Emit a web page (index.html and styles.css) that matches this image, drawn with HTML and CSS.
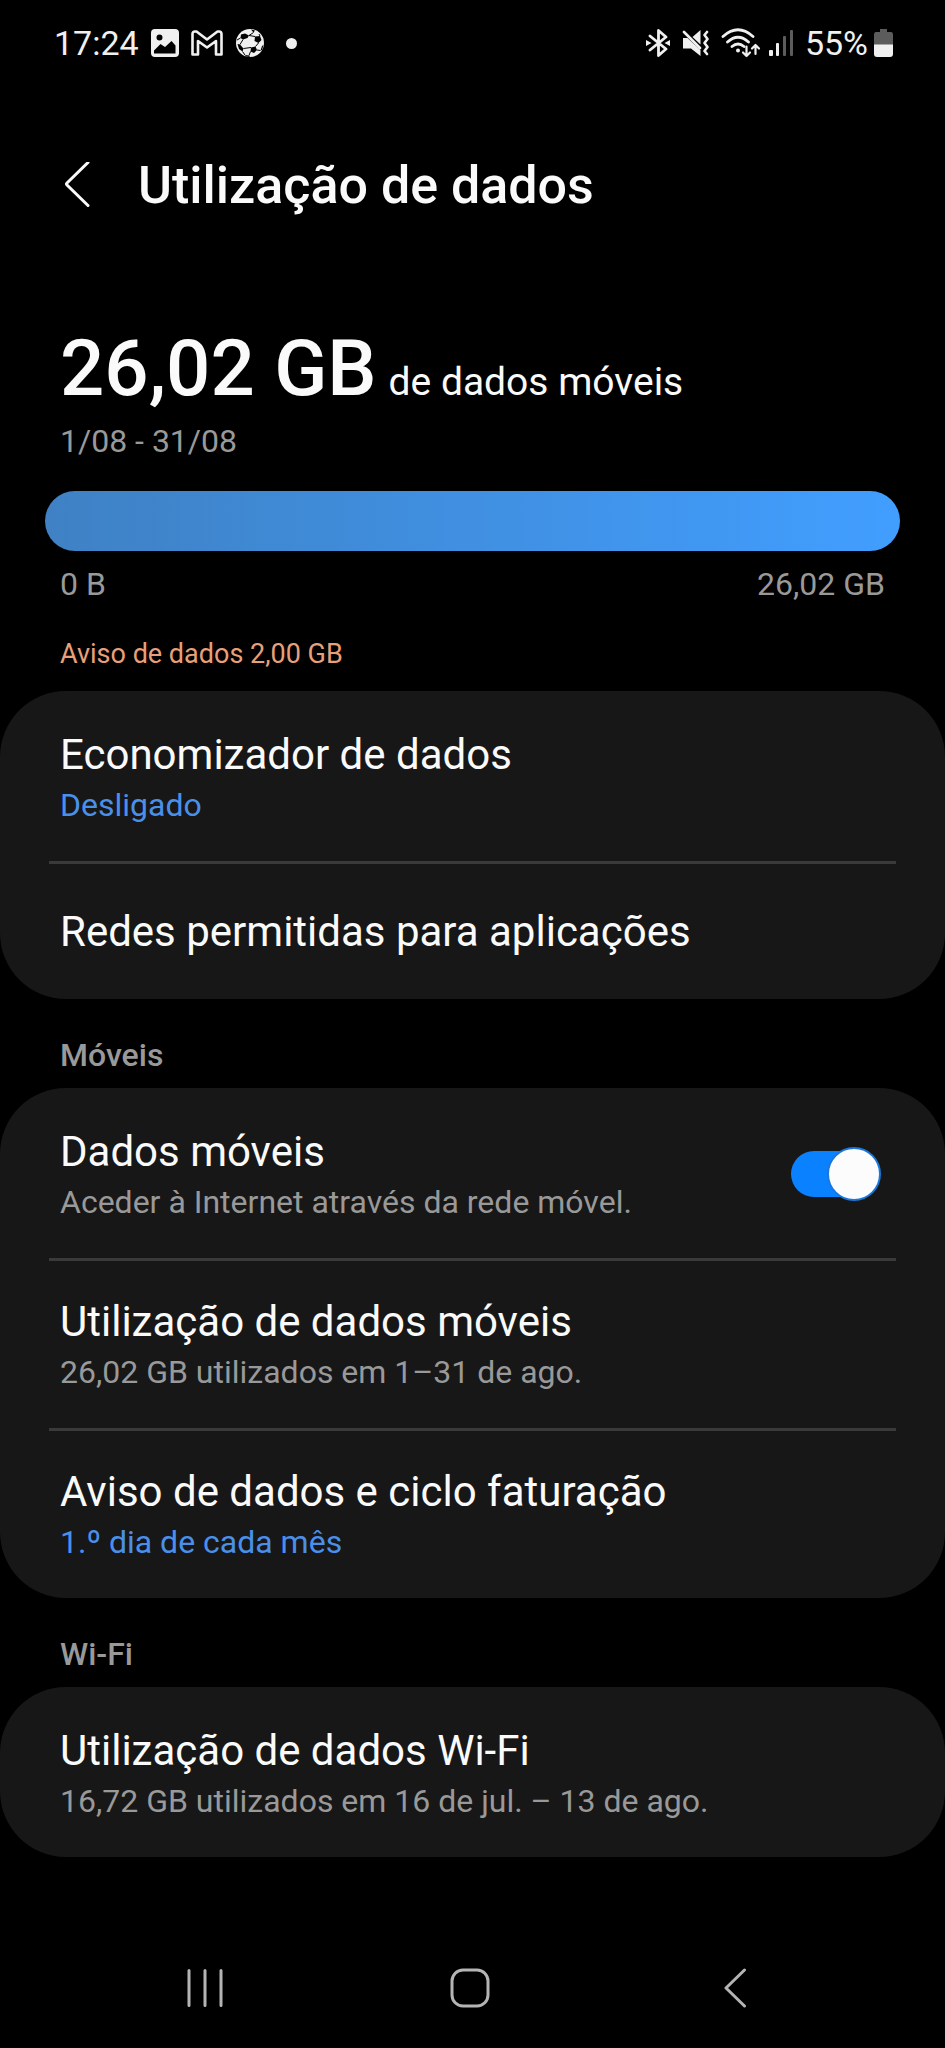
FILE: index.html
```html
<!DOCTYPE html>
<html lang="pt-PT">
<head>
<meta charset="utf-8">
<meta name="viewport" content="width=device-width, initial-scale=1">
<title>Utilização de dados</title>
<link rel="stylesheet" href="styles.css">
</head>
<body>
<div class="screen">
  <div class="status">
    <div class="status-left">
      <span class="status-text">17:24</span>
      <svg class="icon" width="28" height="28" viewBox="0 0 28 28" aria-hidden="true"><path fill="#f0f0f0" fill-rule="evenodd" d="M4 0H24Q28 0 28 4V24Q28 28 24 28H4Q0 28 0 24V4Q0 0 4 0ZM8.500 5.500A3 3 0 1 0 8.500 11.500A3 3 0 1 0 8.500 5.500ZM3 24.500H24.500V16.500L20.500 12L14 18L9.500 15L3 21.500Z"/></svg>
      <svg class="icon" width="32" height="26" viewBox="0 0 32 26" aria-hidden="true"><path fill="none" stroke="#f0f0f0" stroke-width="2.600" stroke-linejoin="round" d="M1.500 4Q1.500 1.500 4 1.500H5.500L16 9.500L26.500 1.500H28Q30.500 1.500 30.500 4V24.500H25V11L16 17.500L7 11V24.500H1.500Z"/></svg>
      <svg class="icon" width="30" height="30" viewBox="0 0 30 30" aria-hidden="true"><circle cx="15" cy="15" r="14" fill="#f0f0f0"/><g fill="#000"><path d="M6 6.500L10 5.500L14 7.500L12.500 10L8 11.500L5.500 10ZM20 8.500L25 8L26.500 12L23.500 15L19.500 13ZM2.500 16L5 16.500L8.500 20.500L7.500 23.500L4 21ZM16 19.500L20.500 18.500L22 22L19 25L15.500 23.500ZM16 1.500L20 2.500L18.500 4.500ZM27 18L28.500 17L27 22L25.500 22.500ZM10 27L14 27.500L15 29L11 28.500Z"/><path fill="none" stroke="#000" stroke-width="1" d="M14 7.500L20 8.500M8 11.500L5 16.500M8.500 20.500L16 19.500M23.500 15L20.500 18.500M18.500 4.500L14 7.500M22 22L25.500 22.500M7.500 23.500L10 27M15.500 23.500L14 27.500M5.500 10L2 12M25 8L24 6"/></g></svg>
      <span class="dot"></span>
    </div>
    <div class="status-right">
      <svg class="icon" width="24" height="28" viewBox="0 0 24 28" aria-hidden="true"><g fill="none" stroke="#f0f0f0" stroke-width="2.800" stroke-linejoin="round" stroke-linecap="round"><path d="M4 7L20 20L12.500 26.500V1.500L20 8L4 21"/></g><path fill="#f0f0f0" d="M0 11L5.500 14L0 17ZM24 11L18.500 14L24 17Z"/></svg>
      <svg class="icon icon-mute" width="27" height="28" viewBox="0 0 27 28" aria-hidden="true"><path fill="#f0f0f0" d="M1 9H5.500L18.500 21V27L9 19.500H1ZM18.500 1V15.500L10.500 8Z"/><path fill="none" stroke="#f0f0f0" stroke-width="2.600" stroke-linecap="round" stroke-linejoin="round" d="M2 3L18 19M25 3L22.500 6L25.500 10L22.500 14L25.500 18L22.500 22L25 25"/></svg>
      <svg class="icon icon-wifi" width="40" height="30" viewBox="0 0 40 30" aria-hidden="true"><g fill="none" stroke="#f0f0f0" stroke-width="2.800" stroke-linecap="round"><path d="M2 8.500Q17 -5 32 8.500M6.500 14Q17 4.500 27.500 14M11 18.500Q17 13.500 23 18.500"/><path stroke-width="2.200" stroke-linejoin="round" d="M25.500 18.500V28M22 24.500L25.500 28L29 24.500M34.500 26V17M31 20.500L34.500 17L38 20.500"/></g><circle cx="17" cy="22.500" r="2" fill="#f0f0f0"/></svg>
      <svg class="icon icon-signal" width="25" height="26" viewBox="0 0 25 26" aria-hidden="true"><g fill="#f0f0f0"><rect x="0" y="20" width="4" height="6" rx="1"/><rect x="7" y="13" width="3" height="13" rx="1"/></g><g fill="#5c5c5c"><rect x="14" y="6" width="3" height="20" rx="1"/><rect x="21" y="0" width="3" height="26" rx="1"/></g></svg>
      <span class="status-text">55%</span>
      <svg class="icon" width="19" height="28" viewBox="0 0 19 28" aria-hidden="true"><path fill="#5c5c5c" d="M6 0H13V3H17Q19 3 19 6V16H0V6Q0 3 2 3H6Z"/><path fill="#f0f0f0" d="M0 15.500H19V25Q19 28 16 28H3Q0 28 0 25Z"/></svg>
    </div>
  </div>

  <header class="header">
    <button class="back" type="button" aria-label="Voltar"><svg width="26" height="48" viewBox="0 0 26 48"><path fill="none" stroke="#fafafa" stroke-width="3" stroke-linecap="round" stroke-linejoin="round" d="M24 .500L3 21Q2 22 3 23L24 43.500"/></svg></button>
    <h1 class="title">Utilização de dados</h1>
  </header>

  <main class="content">
    <section class="summary">
      <p class="total"><strong class="amount">26,02 GB</strong> <span class="kind">de dados móveis</span></p>
      <p class="note">1/08 - 31/08</p>
      <div class="bar"></div>
      <div class="scale"><span>0 B</span><span>26,02 GB</span></div>
      <p class="warning">Aviso de dados 2,00 GB</p>
    </section>

    <div class="card">
      <button class="row" type="button"><span class="texts"><span class="name">Economizador de dados</span><span class="sub sub-active">Desligado</span></span></button>
      <button class="row row-single" type="button"><span class="name">Redes permitidas para aplicações</span></button>
    </div>

    <h2 class="group">Móveis</h2>
    <div class="card">
      <label class="row" for="mobile-data"><span class="texts"><span class="name">Dados móveis</span><span class="sub">Aceder à Internet através da rede móvel.</span></span><input class="switch" id="mobile-data" type="checkbox" role="switch" checked></label>
      <button class="row" type="button"><span class="texts"><span class="name">Utilização de dados móveis</span><span class="sub">26,02 GB utilizados em 1–31 de ago.</span></span></button>
      <button class="row" type="button"><span class="texts"><span class="name">Aviso de dados e ciclo faturação</span><span class="sub sub-active">1.º dia de cada mês</span></span></button>
    </div>

    <h2 class="group">Wi-Fi</h2>
    <div class="card">
      <button class="row" type="button"><span class="texts"><span class="name">Utilização de dados Wi-Fi</span><span class="sub">16,72 GB utilizados em 16 de jul. – 13 de ago.</span></span></button>
    </div>
  </main>

  <nav class="nav">
    <button class="nav-button" type="button" aria-label="Recentes"><svg width="38" height="40" viewBox="0 0 38 40"><path stroke="#b4b4b4" stroke-width="3" stroke-linecap="round" d="M3 2.500V37.500M19 2.500V37.500M35 2.500V37.500"/></svg></button>
    <button class="nav-button" type="button" aria-label="Início"><svg width="40" height="40" viewBox="0 0 40 40"><rect x="2" y="2" width="36" height="36" rx="11" fill="none" stroke="#b4b4b4" stroke-width="3"/></svg></button>
    <button class="nav-button" type="button" aria-label="Voltar"><svg width="24" height="40" viewBox="0 0 24 40"><path fill="none" stroke="#b4b4b4" stroke-width="3" stroke-linecap="round" stroke-linejoin="round" d="M21.500 2L3 20L21.500 38"/></svg></button>
  </nav>
</div>
</body>
</html>
```
FILE: styles.css
```css
*,
*::before {
  box-sizing: border-box;
}

body {
  margin: 0;
  background: #000;
  color: #fafafa;
  font-family: Roboto, "Liberation Sans", sans-serif;
}

h1, h2, p {
  margin: 0;
}

button {
  margin: 0;
  padding: 0;
  border: 0;
  background: none;
  color: inherit;
  font: inherit;
  text-align: left;
}

svg {
  display: block;
}

.screen {
  display: flex;
  flex-direction: column;
  min-height: 100vh;
}

.status {
  display: flex;
  justify-content: space-between;
  align-items: center;
  height: 86px;
  padding: 0 52px 0 54px;
}

.status-left,
.status-right {
  display: flex;
  align-items: center;
  gap: 12px;
}

.status-text {
  color: #f0f0f0;
  font-size: 34px;
  line-height: 40px;
}

.status-right {
  gap: 8px;
}

.status-right .status-text {
  margin: 0 -2px 0 3px;
}

.icon {
  flex: none;
}

.icon-mute,
.icon-wifi {
  margin-left: 4px;
}

.dot {
  width: 11px;
  height: 11px;
  margin-left: 9px;
  border-radius: 50%;
  background: #f0f0f0;
}

.header {
  display: flex;
  align-items: center;
  gap: 48px;
  height: 200px;
  padding: 0 64px;
}

.title {
  font-size: 52px;
  font-weight: 500;
  line-height: 60px;
}

.content {
  flex: 1;
}

.summary {
  padding: 37px 45px 21px;
}

.total,
.note,
.scale,
.warning {
  padding: 0 15px;
}

.total {
  display: flex;
  align-items: baseline;
  gap: 12px;
}

.amount {
  font-size: 78px;
  font-weight: 500;
  line-height: 92px;
}

.kind {
  font-size: 39px;
  line-height: 46px;
}

.note,
.scale {
  color: #999;
  font-size: 32px;
  line-height: 38px;
}

.note {
  margin-top: 7px;
}

.bar {
  height: 60px;
  margin: 31px 0 14px;
  border-radius: 30px;
  background: linear-gradient(to right, #3f81c4, #419eff);
}

.scale {
  display: flex;
  justify-content: space-between;
}

.warning {
  margin-top: 35px;
  color: #e8a07a;
  font-size: 27px;
  line-height: 32px;
}

.card {
  overflow: hidden;
  border-radius: 66px;
  background: #171717;
}

.row {
  position: relative;
  display: flex;
  justify-content: space-between;
  align-items: center;
  width: 100%;
  padding: 39px 66px 37px 60px;
}

.row + .row::before {
  content: "";
  position: absolute;
  top: 0;
  right: 49px;
  left: 49px;
  height: 3px;
  background: #3a3a3a;
}

.row-single {
  padding-top: 46px;
  padding-bottom: 42px;
}

.texts {
  display: flex;
  flex-direction: column;
  gap: 6px;
}

.name {
  font-size: 42px;
  line-height: 50px;
}

.sub {
  color: #999;
  font-size: 32px;
  line-height: 38px;
}

.sub-active {
  color: #4a90ea;
}

.group {
  padding: 37px 60px 14px;
  color: #999;
  font-size: 32px;
  font-weight: 500;
  line-height: 38px;
}

.switch {
  appearance: none;
  position: relative;
  flex: none;
  width: 88px;
  height: 46px;
  margin: 0;
  border-radius: 23px;
  background: #0a82ff;
}

.switch::before {
  content: "";
  position: absolute;
  top: -4px;
  right: -2px;
  width: 54px;
  height: 54px;
  border: 2px solid #1a78dd;
  border-radius: 50%;
  background: #fcfcfc;
}

.nav {
  display: grid;
  grid-template-columns: repeat(3, 1fr);
  height: 120px;
  padding: 0 78px 0 72px;
}

.nav-button {
  display: flex;
  justify-content: center;
  align-items: center;
}
```
